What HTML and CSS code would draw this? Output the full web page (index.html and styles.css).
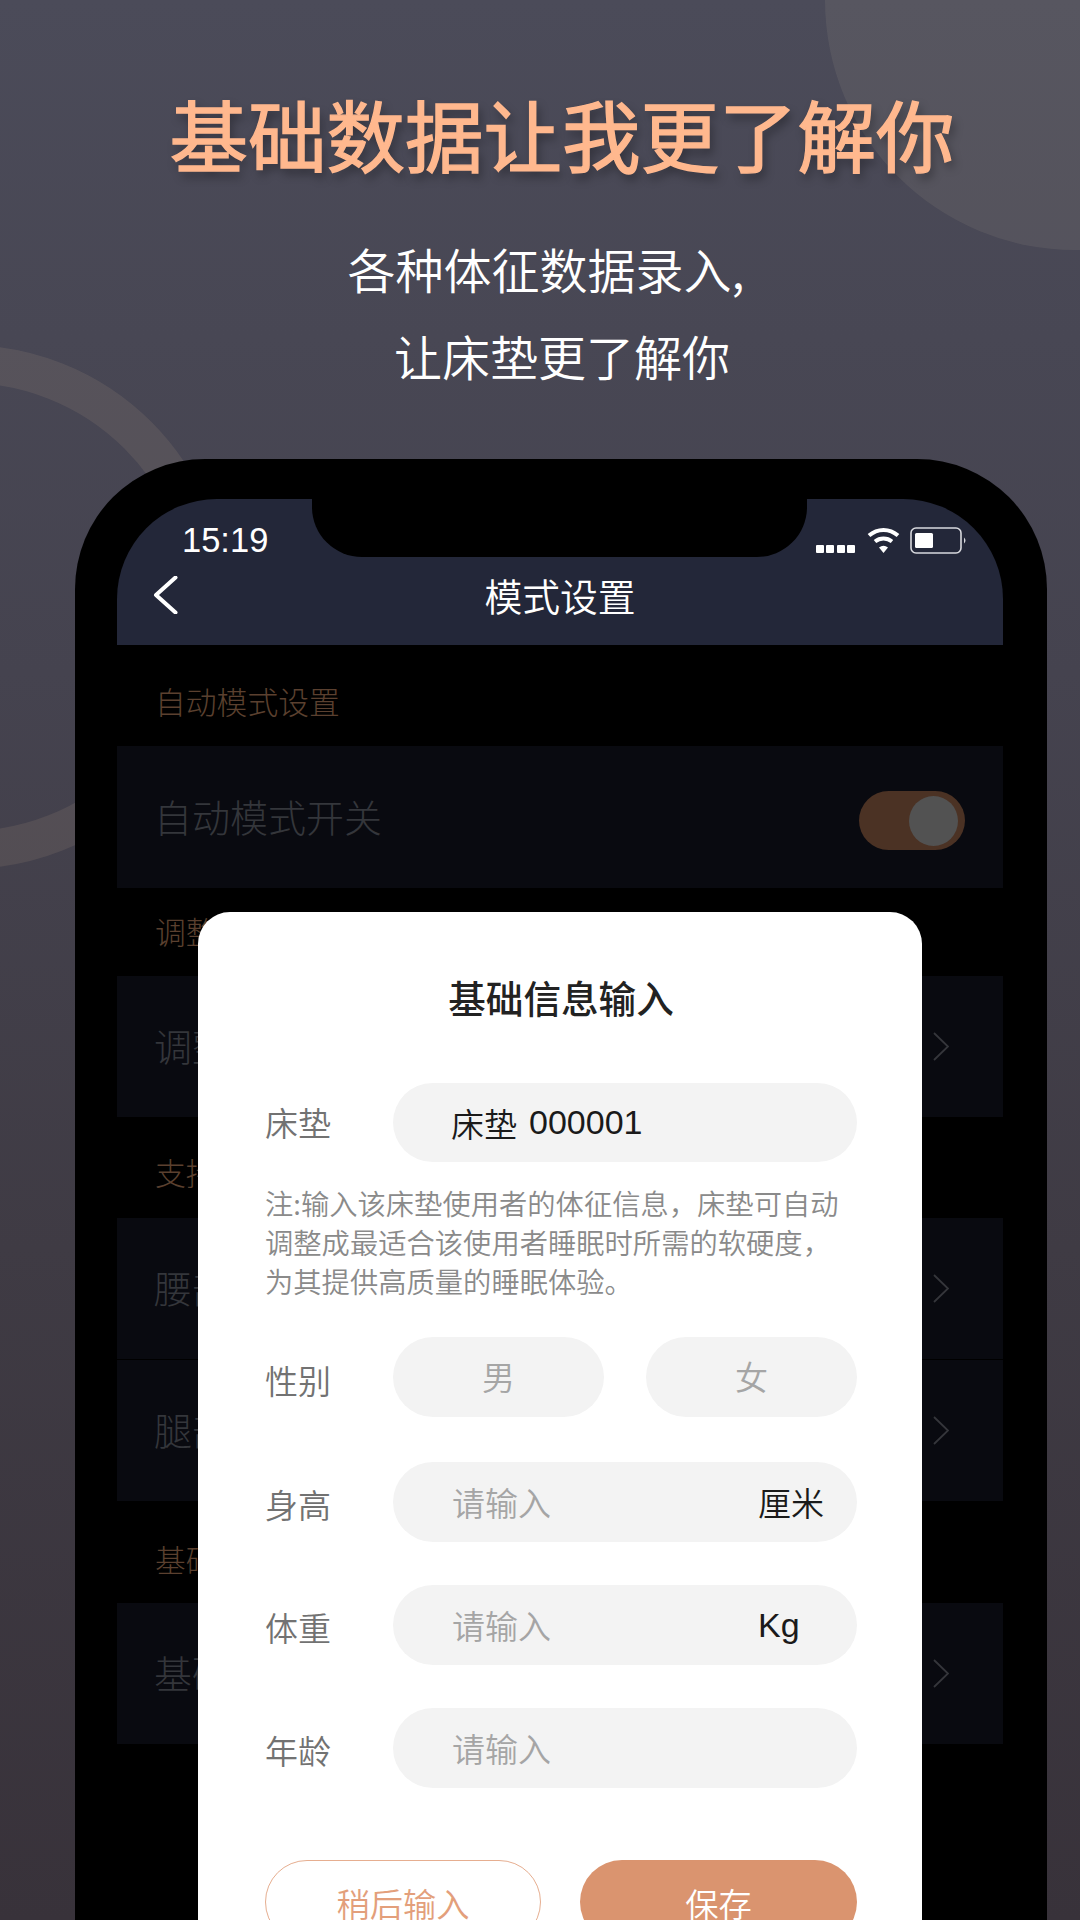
FILE: index.html
```html
<!DOCTYPE html>
<html lang="zh-CN">
<head>
<meta charset="utf-8">
<title>基础数据让我更了解你</title>
<link rel="stylesheet" href="styles.css">
</head>
<body>
<div class="page">
  <div class="deco-circle"></div>
  <div class="deco-ring"></div>
  <header class="hero">
    <h1 class="hero-title">基础数据让我更了解你</h1>
    <p class="hero-sub first-line">各种体征数据录入,</p>
    <p class="hero-sub">让床垫更了解你</p>
  </header>
  <div class="phone">
    <div class="screen">
      <div class="notch"></div>
      <div class="appbar">
        <div class="status">
          <span class="time">15:19</span>
          <div class="status-icons">
            <span class="signal"><i></i><i></i><i></i><i></i></span>
            <svg class="wifi" width="33" height="26" viewBox="0 0 33 26"><path d="M2 8.5C10.500 1 22.500 1 31 8.500" fill="none" stroke="#fff" stroke-width="4"/><path d="M8 14.500C13 10.500 20 10.500 25 14.500" fill="none" stroke="#fff" stroke-width="4"/><path d="M12 20.500Q16.500 17 21 20.500L16.500 26Z" fill="#fff"/></svg>
            <svg class="battery" width="58" height="27" viewBox="0 0 58 27"><rect x="1" y="1" width="50" height="25" rx="5" fill="none" stroke="#d8d9de" stroke-width="1.600"/><rect x="5" y="6" width="18" height="15" rx="1.500" fill="#fff"/><path d="M54 10.500Q57 13.500 54 16.500Z" fill="#d8d9de"/></svg>
          </div>
        </div>
        <div class="nav">
          <svg class="back" width="25" height="38" viewBox="0 0 25 38"><path d="M22.500 1.500L3 19L22.500 36.500" fill="none" stroke="#fff" stroke-width="4" stroke-linecap="round" stroke-linejoin="round"/></svg>
          <span class="nav-title">模式设置</span>
        </div>
      </div>

      <div class="section-label">自动模式设置</div>
      <div class="row tall">
        <span class="row-text">自动模式开关</span>
        <span class="toggle"><span class="knob"></span></span>
      </div>

      <div class="section-label tight">调整模式设置</div>
      <div class="row">
        <span class="row-text">调整模式</span>
        <svg class="chev" width="16" height="29" viewBox="0 0 16 29"><path d="M1 1L15 14.500L1 28" fill="none" stroke="#35363b" stroke-width="1.800"/></svg>
      </div>

      <div class="section-label mid">支持模式设置</div>
      <div class="row joined">
        <span class="row-text">腰部支撑</span>
        <svg class="chev" width="16" height="29" viewBox="0 0 16 29"><path d="M1 1L15 14.500L1 28" fill="none" stroke="#35363b" stroke-width="1.800"/></svg>
      </div>
      <div class="row">
        <span class="row-text">腿部支撑</span>
        <svg class="chev" width="16" height="29" viewBox="0 0 16 29"><path d="M1 1L15 14.500L1 28" fill="none" stroke="#35363b" stroke-width="1.800"/></svg>
      </div>

      <div class="section-label last">基础信息设置</div>
      <div class="row">
        <span class="row-text">基础信息</span>
        <svg class="chev" width="16" height="29" viewBox="0 0 16 29"><path d="M1 1L15 14.500L1 28" fill="none" stroke="#35363b" stroke-width="1.800"/></svg>
      </div>

      <div class="modal">
        <h2 class="modal-title">基础信息输入</h2>
        <div class="field first">
          <span class="field-label level">床垫</span>
          <div class="pill value">床垫<span class="digits">000001</span></div>
        </div>
        <p class="note">注:输入该床垫使用者的体征信息，床垫可自动<br>调整成最适合该使用者睡眠时所需的软硬度，<br>为其提供高质量的睡眠体验。</p>
        <div class="field sex">
          <span class="field-label">性别</span>
          <div class="choices">
            <div class="pill choice">男</div>
            <div class="pill choice">女</div>
          </div>
        </div>
        <div class="field gap-46">
          <span class="field-label">身高</span>
          <div class="pill"><span class="hint">请输入</span><span class="unit">厘米</span></div>
        </div>
        <div class="field gap-43">
          <span class="field-label">体重</span>
          <div class="pill"><span class="hint">请输入</span><span class="unit latin">Kg</span></div>
        </div>
        <div class="field gap-43">
          <span class="field-label">年龄</span>
          <div class="pill"><span class="hint">请输入</span></div>
        </div>
        <div class="actions">
          <div class="btn ghost">稍后输入</div>
          <div class="btn solid">保存</div>
        </div>
      </div>
    </div>
  </div>
</div>
</body>
</html>
```
FILE: styles.css
```css
* { box-sizing: border-box; }
html, body { margin: 0; padding: 0; }
body {
  width: 1080px;
  height: 1920px;
  overflow: hidden;
  font-family: "Noto Sans CJK SC", "Noto Sans", sans-serif;
}
.page {
  position: relative;
  width: 1080px;
  height: 1920px;
  overflow: hidden;
  display: flex;
  flex-direction: column;
  background: linear-gradient(180deg, #4b4b59 0%, #45434f 35%, #3f3b44 65%, #38323a 100%);
}
.deco-circle {
  position: absolute;
  left: 825px;
  top: -250px;
  width: 500px;
  height: 500px;
  border-radius: 50%;
  background: rgba(255, 235, 200, 0.07);
}
.deco-ring {
  position: absolute;
  left: -296px;
  top: 345px;
  width: 524px;
  height: 524px;
  border-radius: 50%;
  border: 38px solid rgba(255, 225, 170, 0.085);
}
.hero {
  position: relative;
  height: 459px;
  padding: 86px 0 0 44px;
  text-align: center;
  flex: none;
}
.hero-title {
  margin: 0 0 45px;
  font-size: 78.500px;
  line-height: 94px;
  font-weight: 400;
  -webkit-text-stroke: 1.400px #ffb88e;
  color: #ffb88e;
  text-shadow: 3px 6px 10px rgba(0, 0, 0, 0.35);
}
.hero-sub {
  margin: 0;
  font-size: 48px;
  line-height: 87px;
  font-weight: 350;
  color: #fff;
}
.hero-sub.first-line { padding-right: 32px; }
.phone {
  position: relative;
  flex: 1;
  margin-left: 75px;
  width: 972px;
  padding: 40px 44px 0 42px;
  background: #000;
  border-radius: 130px 130px 0 0;
  display: flex;
}
.screen {
  position: relative;
  flex: 1;
  background: #000;
  border-radius: 100px 100px 0 0;
  overflow: hidden;
}
.notch {
  position: absolute;
  left: 195px;
  top: 0;
  width: 495px;
  height: 58px;
  background: #000;
  border-radius: 0 0 50px 50px;
}
.appbar {
  height: 146px;
  background: #232739;
  color: #fff;
}
.status {
  display: flex;
  justify-content: space-between;
  align-items: flex-start;
  height: 66px;
  padding: 22px 35px 0 65px;
}
.time {
  font-family: "Liberation Sans", sans-serif;
  font-size: 34.500px;
  line-height: 38px;
}
.status-icons {
  display: flex;
  align-items: flex-start;
  padding-top: 6px;
}
.signal {
  display: flex;
  gap: 2.300px;
  margin: 18px 12px 0 0;
}
.signal i {
  width: 8px;
  height: 8px;
  border-radius: 1px;
  background: #fff;
}
.wifi { margin-right: 10px; }
.nav {
  position: relative;
  height: 60px;
  display: flex;
  align-items: center;
  justify-content: center;
}
.back {
  position: absolute;
  left: 36px;
  top: 11px;
}
.nav-title {
  font-size: 37.800px;
  line-height: 60px;
  font-weight: 350;
}
.section-label {
  height: 101px;
  padding-top: 34px;
  padding-left: 38px;
  font-size: 30.800px;
  line-height: 44px;
  font-weight: 300;
  color: #5b402f;
}
.section-label.tight { height: 88px; padding-top: 21px; }
.section-label.mid { padding-top: 33px; }
.section-label.last { height: 102px; padding-top: 36px; }
.row {
  height: 141px;
  display: flex;
  align-items: center;
  justify-content: space-between;
  padding: 0 54px 0 37px;
  background: #090a10;
  font-size: 38px;
  font-weight: 300;
  color: #34363b;
}
.row-text { margin-bottom: 4px; }
.row.tall { height: 142px; }
.row.joined { margin-bottom: 1px; }
.toggle {
  position: relative;
  width: 106px;
  height: 59px;
  margin: 6px -16px 0 0;
  border-radius: 30px;
  background: #4b3224;
}
.knob {
  position: absolute;
  right: 7px;
  top: 5px;
  width: 49px;
  height: 50px;
  border-radius: 50%;
  background: #525252;
}
.modal {
  position: absolute;
  left: 81px;
  top: 413px;
  width: 724px;
  height: 1100px;
  padding: 60px 65px 0 67px;
  background: #fff;
  border-radius: 32px;
}
.modal-title {
  margin: 0;
  text-align: center;
  font-size: 37.600px;
  line-height: 50px;
  font-weight: 500;
  color: #222;
}
.field {
  display: flex;
  align-items: center;
  height: 79px;
}
.field.first { margin-top: 61px; }
.field.sex { margin-top: 37px; height: 80px; }
.field.gap-46 { margin-top: 45px; height: 80px; }
.field.gap-43 { margin-top: 43px; height: 80px; }
.field-label {
  flex: none;
  width: 128px;
  padding-top: 3px;
  font-size: 33px;
  line-height: 44px;
  font-weight: 350;
  color: #727272;
}
.sex .field-label { padding-top: 6px; }
.field-label.level { padding: 0 0 2px; }
.pill {
  flex: 1;
  height: 100%;
  display: flex;
  align-items: center;
  justify-content: space-between;
  padding: 0 33px 0 59px;
  border-radius: 40px;
  background: #f3f3f3;
  font-size: 33px;
  font-weight: 350;
}
.pill.value {
  padding-left: 58px;
  color: #1a1a1a;
  justify-content: flex-start;
}
.digits {
  margin-left: 12px;
  font-family: "Liberation Sans", sans-serif;
  font-size: 34px;
}
.choices {
  flex: 1;
  height: 100%;
  display: flex;
  gap: 42px;
}
.pill.choice {
  justify-content: center;
  padding: 0 0 2px;
  color: #a5a5a5;
}
.hint { color: #a5a5a5; }
.unit {
  width: 66px;
  color: #1a1a1a;
}
.unit.latin {
  font-family: "Liberation Sans", sans-serif;
  font-size: 34px;
}
.note {
  margin: 21px 0 0;
  font-size: 28.300px;
  line-height: 39px;
  font-weight: 350;
  color: #8a8a8a;
  white-space: nowrap;
}
.actions {
  margin-top: 72px;
  display: flex;
  justify-content: space-between;
}
.btn {
  height: 84px;
  border-radius: 42px;
  display: flex;
  align-items: center;
  justify-content: center;
  font-size: 33.300px;
  font-weight: 350;
}
.btn.ghost {
  width: 276px;
  border: 1.500px solid #e6ae90;
  color: #e39f7b;
  background: #fff;
}
.btn.solid {
  width: 277px;
  background: #da946f;
  color: #fff;
}
```
